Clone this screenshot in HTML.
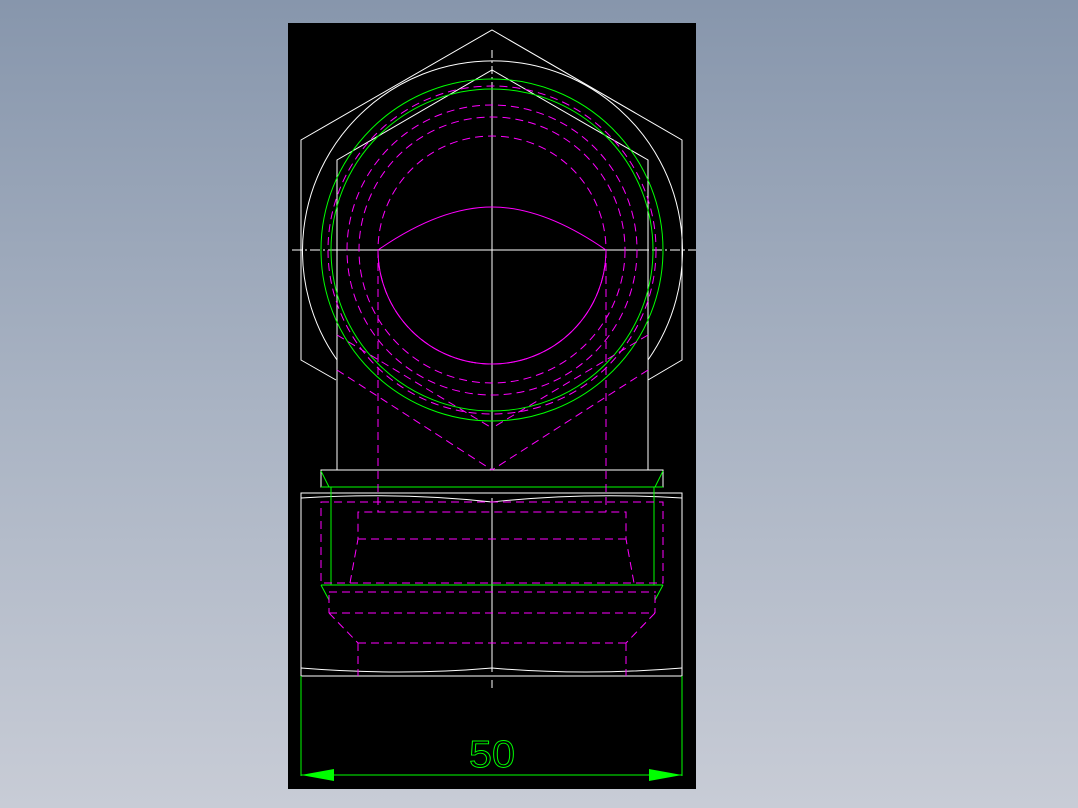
<!DOCTYPE html>
<html><head><meta charset="utf-8"><style>
html,body{margin:0;padding:0}
body{width:1078px;height:808px;overflow:hidden;background:linear-gradient(#8796ac,#a9b3c3 50%,#c8ccd6)}
svg{position:absolute;left:0;top:0}
</style></head><body>
<svg width="1078" height="808" viewBox="0 0 1078 808">
<rect x="288" y="23" width="408" height="766" fill="#000"/>
<g fill="none" stroke-width="1">
<!-- white geometry -->
<g stroke="#fff">
<polyline points="336,380 301,360 301,140 492,30 682,140 682,360 648,380"/>
<path d="M337,360 A190,190 0 1 1 648,360"/>
<polyline points="337,470 337,160 492,70 648,160 648,470"/>
<line x1="337" y1="250" x2="648" y2="250"/>
<line x1="492" y1="88" x2="492" y2="470"/>
<line x1="292" y1="250" x2="696" y2="250" stroke-dasharray="10,3,2,3"/>
<line x1="492" y1="50" x2="492" y2="88" stroke-dasharray="8,3,2,3"/>
<rect x="321" y="470" width="342" height="17"/>
<rect x="301" y="493" width="381" height="183"/>
<path d="M301,498 Q400,492 492,502 Q585,492 682,498"/>
<path d="M301,668 Q400,676 492,668 Q585,676 682,668"/>
<line x1="492" y1="498" x2="492" y2="672"/>
<line x1="492" y1="680" x2="492" y2="688"/>
</g>
<!-- green -->
<g stroke="#0f0">
<circle cx="492" cy="250" r="171"/>
<circle cx="492" cy="250" r="161"/>
<line x1="321" y1="487" x2="663" y2="487"/>
<line x1="331" y1="487" x2="331" y2="585"/>
<line x1="654" y1="487" x2="654" y2="585"/>
<line x1="321" y1="585" x2="663" y2="585"/>
<line x1="321" y1="471" x2="329" y2="487"/>
<line x1="663" y1="471" x2="655" y2="487"/>
<line x1="321" y1="585" x2="329" y2="600"/>
<line x1="663" y1="585" x2="655" y2="600"/>
<line x1="301" y1="676" x2="301" y2="776"/>
<line x1="682" y1="676" x2="682" y2="776"/>
<line x1="301" y1="775" x2="682" y2="775"/>
</g>
<polygon points="301,775 334,769 334,781" fill="#0f0"/>
<polygon points="682,775 649,769 649,781" fill="#0f0"/>
<text x="492" y="767" text-anchor="middle" font-family="Liberation Sans, sans-serif" font-size="38" stroke="#0f0" stroke-width="0.9" fill="none" textLength="46" lengthAdjust="spacingAndGlyphs">50</text>
<!-- magenta -->
<g stroke="#f0f">
<path d="M378,250 A114,114 0 0 0 606,250"/>
<path d="M378,250 Q440,207 492,207 Q544,207 606,250"/>
<g stroke-dasharray="8,5">
<circle cx="492" cy="250" r="164"/>
<circle cx="492" cy="250" r="145"/>
<circle cx="492" cy="250" r="133"/>
<circle cx="492" cy="250" r="114"/>
<line x1="378" y1="250" x2="378" y2="512"/>
<line x1="606" y1="250" x2="606" y2="512"/>
<line x1="337" y1="370" x2="492" y2="470"/>
<line x1="648" y1="370" x2="492" y2="470"/>
<line x1="337" y1="335" x2="492" y2="428"/>
<line x1="648" y1="335" x2="492" y2="428"/>
<rect x="321" y="502" width="342" height="81"/>
<polyline points="350,583 358,539 358,512 626,512 626,539 634,583"/>
<line x1="358" y1="539" x2="626" y2="539"/>
<line x1="329" y1="592" x2="656" y2="592"/>
<line x1="329" y1="613" x2="655" y2="613"/>
<line x1="329" y1="595" x2="329" y2="613"/>
<line x1="655" y1="595" x2="655" y2="613"/>
<line x1="329" y1="613" x2="358" y2="643"/>
<line x1="655" y1="613" x2="626" y2="643"/>
<line x1="358" y1="643" x2="626" y2="643"/>
<line x1="358" y1="643" x2="358" y2="676"/>
<line x1="626" y1="643" x2="626" y2="676"/>
</g>
</g>
</g>
</svg>
</body></html>
